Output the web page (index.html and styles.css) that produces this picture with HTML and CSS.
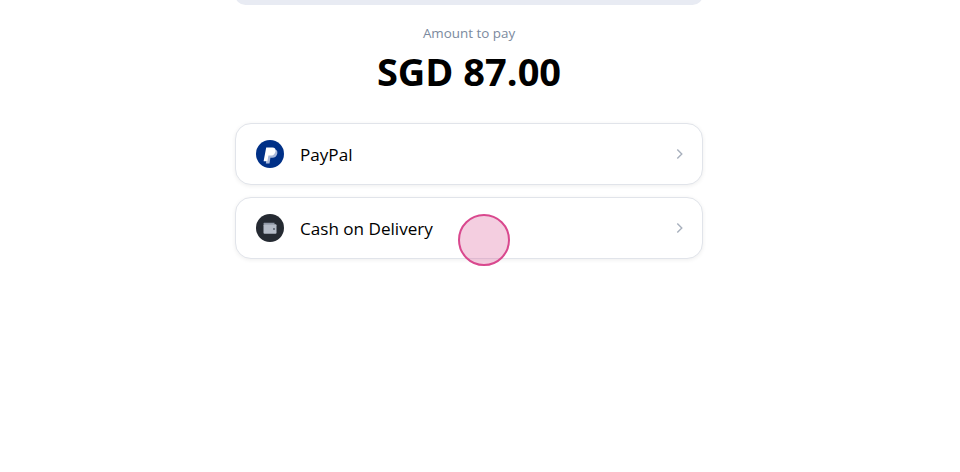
FILE: index.html
```html
<!DOCTYPE html>
<html>
	<head>
		<meta charset="UTF-8">
		<title>Payment</title>
		<link rel="stylesheet" href="styles.css">
	</head>
	<body>
		<div class="wrap">
			<div class="topBar"></div>
			<div class="amount">
				<p class="amountLabel">Amount to pay</p>
				<p class="amountValue">SGD 87.00</p>
			</div>
			<ul class="methods">
				<li class="method">
					<svg class="methodIcon" viewBox="0 0 28 28">
						<circle cx="14" cy="14" r="14" fill="#003087"/>
						<path d="M12 9.5h6.2c2.4 0 3.6 1.5 3.1 4-.5 2.8-2.5 4.3-5 4.3h-1.9l-.9 5.7H9.8z" fill="#a9b9da"/>
						<path d="M10.2 7.5h6.2c2.4 0 3.6 1.4 3.1 3.9-.5 2.8-2.5 4.2-5.1 4.2h-2l-1 5.7H7.6z" fill="#fff"/>
					</svg>
					<span class="methodName">PayPal</span>
					<svg class="methodArrow" viewBox="0 0 16 16">
						<path d="M7.3 3.5 11.8 8 7.3 12.5" fill="none" stroke="#a8b0bd" stroke-width="1.4"/>
					</svg>
				</li>
				<li class="method">
					<svg class="methodIcon" viewBox="0 0 28 28">
						<circle cx="14" cy="14" r="14" fill="#252a32"/>
						<path d="M8.5 8.7h10v1.8H7.5v-.8c0-.6.4-1 1-1z" fill="#8f98a6"/>
						<rect x="7.5" y="10.2" width="13" height="9.6" rx="1" fill="#b4bbc7"/>
						<circle cx="18" cy="15" r=".9" fill="#4b5260"/>
					</svg>
					<span class="methodName">Cash on Delivery</span>
					<svg class="methodArrow" viewBox="0 0 16 16">
						<path d="M7.3 3.5 11.8 8 7.3 12.5" fill="none" stroke="#a8b0bd" stroke-width="1.4"/>
					</svg>
				</li>
			</ul>
		</div>
		<div class="touchDot"></div>
	</body>
</html>
```

FILE: styles.css
```css
*{margin:0;padding:0;box-sizing:border-box;}
ul{list-style:none;}
html,body{height:100%;background:#fff;}
body{font-family:"Open Sans","Noto Sans",sans-serif;color:#000;position:relative;overflow:hidden;}
.wrap{width:468px;margin-left:235px;}
.topBar{height:21px;margin-top:-16px;background:#e8ebf3;border-radius:16px;}
.amount{text-align:center;padding-top:18px;}
.amountLabel{font-size:13.4px;line-height:20px;color:#7b8a9e;}
.amountValue{font-size:38px;line-height:48px;font-weight:700;margin-top:4px;}
.methods{display:flex;flex-direction:column;gap:12px;margin-top:28px;}
.method{height:62px;display:flex;align-items:center;padding:0 16px 0 20px;background:#fff;border:1px solid #e1e4ea;border-radius:16px;box-shadow:0 1px 4px rgba(0,0,0,.07);}
.methodIcon{width:28px;height:28px;flex:none;}
.methodName{flex:1;margin-left:16px;font-size:17.1px;padding-top:1px;}
.methodArrow{width:16px;height:16px;flex:none;}
.touchDot{position:absolute;left:458px;top:214px;width:52px;height:52px;border-radius:50%;background:rgba(216,78,145,.28);border:2px solid #d9488e;}
```
